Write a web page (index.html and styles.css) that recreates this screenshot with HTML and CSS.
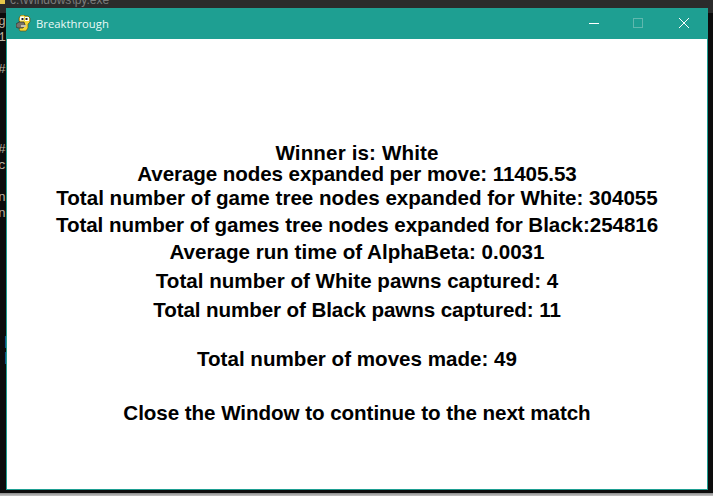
FILE: index.html
```html
<!DOCTYPE html>
<html lang="en">

<head>
    <meta charset="UTF-8">
    <meta name="viewport" content="width=device-width, initial-scale=1.0">
    <title>Breakthrough</title>
    <link rel="stylesheet" href="styles.css">
</head>

<body>
    <!-- console window behind the game -->
    <div class="console-title"><span class="console-icon"></span><span class="console-name">c:\Windows\py.exe</span></div>
    <pre class="console-text">g
1

#




#
c

n
n







<span class="console-mark">|</span>
<span class="console-mark">|</span></pre>
    <div class="desktop-strip"></div>

    <div class="window">
        <header class="titlebar">
            <svg class="app-icon" width="15" height="17" viewBox="0 0 15 17">
                <path d="M3 3 L5 0 H8 L9 1 H12 L14 3 V7 L12 9 V13 L10 16 H4 L3 14 L5 11 V8 L3 6 Z" fill="#f4d733" stroke="#5c5320" stroke-width="0.7" />
                <path d="M0 9 L3 7 H8 L9 10 L7 13 H2 L0 12 Z" fill="#77736b" stroke="#2e2c28" stroke-width="0.7" />
                <path d="M5 10 H10 V12 H5 Z" fill="#c9c3b4" />
                <rect x="4" y="1.5" width="4" height="4" fill="#fff" />
                <rect x="9" y="2" width="4" height="4" fill="#fff" />
                <rect x="5.5" y="3" width="2" height="2" fill="#222" />
                <rect x="9.5" y="3" width="2" height="2" fill="#222" />
            </svg>
            <span class="title">Breakthrough</span>
            <div class="controls">
                <svg width="46" height="31" viewBox="0 0 46 31"><path d="M20 15.5 H30" stroke="#fff" fill="none" /></svg>
                <svg width="46" height="31" viewBox="0 0 46 31"><rect x="18.5" y="10.5" width="9" height="9" stroke="#5fb8ae" fill="none" /></svg>
                <svg width="46" height="31" viewBox="0 0 46 31"><path d="M18 10 L28 20 M28 10 L18 20" stroke="#fff" fill="none" /></svg>
            </div>
        </header>
        <main class="stats">
            <p class="line l1">Winner is: White</p>
            <p class="line l2">Average nodes expanded per move: 11405.53</p>
            <p class="line l3">Total number of game tree nodes expanded for White: 304055</p>
            <p class="line l4">Total number of games tree nodes expanded for Black:254816</p>
            <p class="line l5">Average run time of AlphaBeta: 0.0031</p>
            <p class="line l6">Total number of White pawns captured: 4</p>
            <p class="line l7">Total number of Black pawns captured: 11</p>
            <p class="line l8">Total number of moves made: 49</p>
            <p class="line l9">Close the Window to continue to the next match</p>
        </main>
    </div>
</body>

</html>
```

FILE: styles.css
```css
* {
    margin: 0;
    padding: 0;
    box-sizing: border-box;
}

body {
    position: relative;
    width: 713px;
    height: 496px;
    overflow: hidden;
    background-color: #0c0c0c;
}

/* Console behind */
.console-title {
    display: flex;
    height: 13px;
    background-color: #2b2b2b;
    overflow: hidden;
}

.console-icon {
    width: 5px;
    height: 4px;
    margin-right: 5px;
    background-color: #e8c84a;
}

.console-name {
    color: #7c7c7c;
    font: 12px/0 "Liberation Sans", sans-serif;
}

.console-text {
    position: absolute;
    left: -2px;
    top: 14px;
    color: #b8b0a0;
    font: 13px/16px "Liberation Mono", monospace;
}

.console-mark {
    padding-left: 4px;
    color: #1f7f9a;
}

.desktop-strip {
    position: absolute;
    left: 0;
    right: 0;
    bottom: 0;
    height: 3px;
    background: linear-gradient(#8c8c8c, #c4c4c4);
}

/* Game window */
.window {
    position: absolute;
    left: 6px;
    top: 8px;
    width: 702px;
    height: 482px;
    display: flex;
    flex-direction: column;
    background-color: #fff;
    border: 1px solid #1e9f92;
    border-top: none;
}

.titlebar {
    display: flex;
    align-items: center;
    height: 31px;
    flex-shrink: 0;
    padding-left: 9px;
    background-color: #1e9f92;
}

.app-icon {
    margin-right: 5px;
}

.title {
    color: #eafaf7;
    font: 11.3px "Open Sans", sans-serif;
}

.controls {
    display: flex;
    margin-left: auto;
}

/* Stats text */
.stats {
    padding-top: 103px;
    color: #000;
    font: bold 20.6px/22px "Liberation Sans", sans-serif;
    text-align: center;
}

.l1 { letter-spacing: 0.13px; }
.l2 { margin-top: -1px; letter-spacing: -0.1px; }
.l3 { margin-top: 2px; }
.l4 { margin-top: 5px; letter-spacing: -0.07px; }
.l5 { margin-top: 5px; }
.l6 { margin-top: 7px; }
.l7 { margin-top: 7px; letter-spacing: -0.1px; }
.l8 { margin-top: 27px; }
.l9 { margin-top: 32px; letter-spacing: -0.06px; }
```
